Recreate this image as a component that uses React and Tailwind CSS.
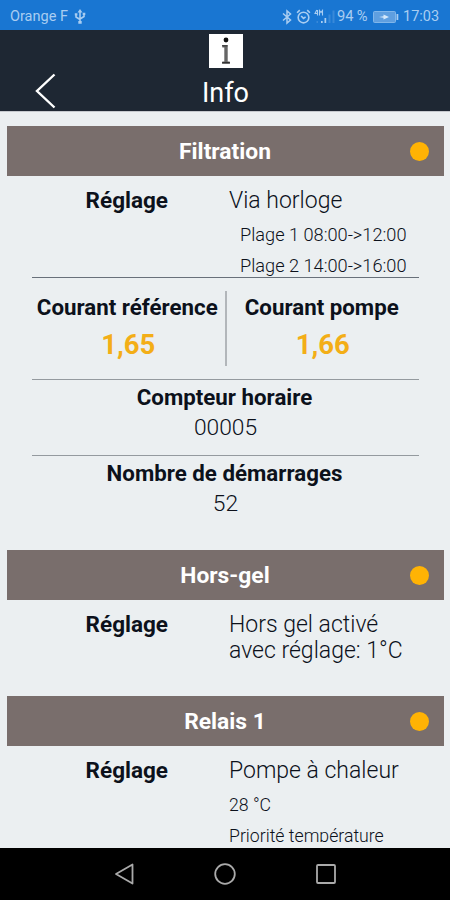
const FONT = "font-['Roboto','Noto_Sans',sans-serif]";

function StatusBar() {
  return (
    <div className="flex h-[30px] shrink-0 items-center bg-[#1976d2] pl-[10px] pr-[10px] pt-[3px] text-[14px] text-[#a9cdf1]">
      <span className="w-[63px] whitespace-nowrap text-[14.5px]">Orange F</span>
      <svg className="ml-[1px] mr-auto" width="12" height="16" viewBox="0 0 12 16" fill="none" stroke="#a9cdf1" strokeWidth="1.6">
        <path d="M6 2v11M2 5.500v2.500L6 10.500M10 5v2.500L6 10" />
        <path d="M6 0l2.500 3.500h-5zM4.300 12h3.400v2.800H4.300zM.8 4.300h2.600v2.200H.8zM8.700 3.800h2.600V6H8.700z" fill="#a9cdf1" stroke="none" />
      </svg>
      <svg width="10" height="16" viewBox="0 0 10 16" fill="none" stroke="#a9cdf1" strokeWidth="1.5">
        <path d="M1 4.500l7.500 6.500L5 14V2l3.500 3L1 11.500" />
      </svg>
      <svg className="ml-[4px]" width="15" height="16" viewBox="0 0 14 15" fill="none" stroke="#a9cdf1" strokeWidth="1.5">
        <circle cx="7" cy="8" r="5" />
        <path d="M4.800 6.500L7 8.800l2-1.500M1 3.500L3.500 1M13 3.500L10.500 1" />
      </svg>
      <svg className="ml-[3px]" width="22" height="16" viewBox="0 0 22 16" fill="#a9cdf1">
        <path d="M2.800 1L1 4.500h2.800M3.500 1V6.500M5.500 6.500V1.500l1.500 2 1.500-2v5" fill="none" stroke="#a9cdf1" strokeWidth="1.100" />
        <path d="M7 12h1.700v2H7zM10.500 9h1.700v5h-1.700z" />
        <path d="M2.500 12H4v2H2.500zM14.500 5.500H16.500V14h-2zM18.500 1.500h2V14h-2z" opacity=".22" />
      </svg>
      <span className="ml-[1px] w-[32px] whitespace-nowrap text-[14.700px] tracking-[-0.1px]">94 %</span>
      <svg className="ml-[4px]" width="26" height="12" viewBox="0 0 26 12">
        <rect x=".5" y=".5" width="22" height="11" rx="1" fill="#5f9fe0" stroke="#80b6ea" />
        <path d="M23.500 3h1.800v6h-1.800z" fill="#a9cdf1" />
        <path d="M6 6l4.500-.8V3.500L16 6l-5.500 2.500V6.800z" fill="#d4e8fb" />
      </svg>
      <span className="ml-[4px] w-[37px] whitespace-nowrap text-[14.5px]">17:03</span>
    </div>
  );
}

function Header() {
  return (
    <header className="flex h-[81px] shrink-0 items-end bg-[#1e2733]">
      <svg className="mb-[2px] ml-[34px]" width="24" height="36" viewBox="0 0 24 36" fill="none" stroke="#fff" strokeWidth="2.400">
        <path d="M20.500 1.500L3 18l17.500 16.500" />
      </svg>
      <div className="ml-[109px] flex w-[117px] flex-col items-center self-start pt-[4px]">
        <svg width="34" height="34" viewBox="0 0 34 34">
          <rect width="34" height="34" fill="#fff" />
          <circle cx="17" cy="6" r="2.400" fill="#111" />
          <path d="M13.300 11.500h5.400v16h2v2h-7.400v-2h2V13.500h-2z" fill="#666" />
          <path d="M13 28.200h8v1.200h-8zM13 11.300h5.700v1H13z" fill="#222" />
        </svg>
        <h1 className="mt-[9px] text-[27px] leading-[32px] text-white">Info</h1>
      </div>
    </header>
  );
}

function SectionBar({ title }) {
  return (
    <div className="grid h-[50px] grid-cols-[1fr_auto_1fr] items-center bg-[#796e6c] pl-[14px] pr-[15px]">
      <h2 className="col-start-2 pt-[3px] text-[22.8px] font-bold text-white">{title}</h2>
      <span className="size-[19px] justify-self-end rounded-full bg-[#ffb304]" />
    </div>
  );
}

function Setting({ children }) {
  return (
    <div className="flex pt-[11px] text-[23px] leading-[26px]">
      <div className="w-[161px] text-right text-[22.5px] font-bold">Réglage</div>
      <div className="ml-[61px] pt-px font-light whitespace-nowrap">{children}</div>
    </div>
  );
}

function Current({ label, value }) {
  return (
    <div className="flex flex-1 flex-col items-center pt-[2px] whitespace-nowrap">
      <div className="-ml-[2px] text-[22.3px] leading-[28px] font-bold">{label}</div>
      <div className="mt-[8px] text-[27.5px] leading-[32px] font-bold text-[#f3ae17]">{value}</div>
    </div>
  );
}

function Counter({ label, value }) {
  return (
    <div className="flex h-[75px] flex-col items-center pt-[3px] text-[22.3px]">
      <div className="-ml-[2px] leading-[28px] font-bold">{label}</div>
      <div className="mt-[3px] text-[22.800px] leading-[28px] font-light">{value}</div>
    </div>
  );
}

export default function App() {
  return (
    <div className={`flex h-[900px] w-[450px] flex-col overflow-hidden bg-[#ebeff1] text-[#0c111b] ${FONT}`}>
      <StatusBar />
      <Header />
      <main className="mb-[6px] flex min-h-0 flex-1 flex-col overflow-hidden border-t border-[#c5c9ce] pt-[14px] pr-[6px] pl-[7px]">
        <section className="h-[424px] shrink-0">
          <SectionBar title="Filtration" />
          <div className="h-[101px]">
            <Setting>
              Via horloge
              <div className="mt-[5px] ml-[11px] text-[18.2px] leading-[31px]">
                <div>Plage 1 08:00-&gt;12:00</div>
                <div>Plage 2 14:00-&gt;16:00</div>
              </div>
            </Setting>
          </div>
          <div className="mx-[25px] border-t-[1.500px] border-[#68707a]">
            <div className="flex h-[101px] pt-[13px]">
              <Current label="Courant référence" value="1,65" />
              <div className="h-[75px] w-[2px] bg-[#b2b6ba]" />
              <Current label="Courant pompe" value="1,66" />
            </div>
            <div className="border-t-[1.500px] border-[#949a9f]">
              <Counter label="Compteur horaire" value="00005" />
            </div>
            <div className="border-t-[1.500px] border-[#949a9f]">
              <Counter label="Nombre de démarrages" value="52" />
            </div>
          </div>
        </section>
        <section className="h-[146px] shrink-0">
          <SectionBar title="Hors-gel" />
          <Setting>
            Hors gel activé
            <br />
            avec réglage: 1°C
          </Setting>
        </section>
        <section className="shrink-0">
          <SectionBar title="Relais 1" />
          <Setting>
            Pompe à chaleur
            <div className="mt-[6px] text-[17.7px] leading-[31px]">
              <div>28 °C</div>
              <div>Priorité température</div>
            </div>
          </Setting>
        </section>
      </main>
      <nav className="flex h-[52px] shrink-0 items-center justify-center gap-[80px] bg-black">
        <svg width="20" height="22" viewBox="0 0 20 22" fill="none" stroke="#aaa" strokeWidth="1.800" strokeLinejoin="round">
          <path d="M18.500 1.500v19L2 11z" />
        </svg>
        <svg width="22" height="22" viewBox="0 0 22 22" fill="none" stroke="#aaa" strokeWidth="1.800">
          <circle cx="11" cy="11" r="9.800" />
        </svg>
        <svg width="20" height="20" viewBox="0 0 20 20" fill="none" stroke="#aaa" strokeWidth="1.800">
          <rect x="1" y="1" width="18" height="18" rx="1" />
        </svg>
      </nav>
    </div>
  );
}
